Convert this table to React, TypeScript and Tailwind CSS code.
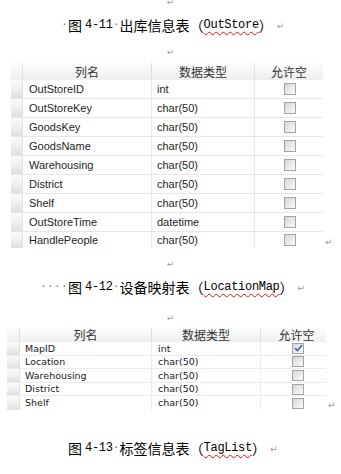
import React from "react";

const CJK = '"Noto Sans CJK SC", "Noto Sans", sans-serif';
const MONO = '"Liberation Mono", "Noto Sans CJK SC", monospace';

function Ret({ className = "" }: { className?: string }) {
  return (
    <span
      className={`text-[9px] leading-none text-[#9a9a9a] ${className}`}
      style={{ fontFamily: '"DejaVu Sans", sans-serif' }}
    >
      ↵
    </span>
  );
}

function Dot() {
  return (
    <span
      className="inline-flex w-[7px] justify-center text-[12px] leading-none text-[#6a6a6a]"
      style={{ fontFamily: '"DejaVu Sans", sans-serif' }}
    >
      ·
    </span>
  );
}

function Mono({ children, wavy = false }: { children: React.ReactNode; wavy?: boolean }) {
  return (
    <span
      className={`text-[12px] tracking-[-0.3px] ${wavy ? "underline decoration-wavy decoration-[#e01010] decoration-1 underline-offset-[3px]" : ""}`}
      style={{ fontFamily: MONO }}
    >
      {children}
    </span>
  );
}

function Title({ lead, dots, num, name, en }: { lead: string; dots: number; num: string; name: string; en: string }) {
  return (
    <div
      className={`flex h-[20px] items-center whitespace-nowrap text-[14px] leading-[20px] text-black ${lead}`}
      style={{ fontFamily: CJK }}
    >
      {Array.from({ length: dots }).map((_, i) => (
        <Dot key={i} />
      ))}
      <span>图</span>
      <span className="inline-block w-[3px]" />
      <Mono>{num}</Mono>
      <Dot />
      <span>{name}</span>
      <span>（</span>
      <Mono wavy>{en}</Mono>
      <span>）</span>
      <Ret className="ml-[4px] mt-[3px]" />
    </div>
  );
}

function Box({ checked = false, small = false }: { checked?: boolean; small?: boolean }) {
  return (
    <span
      className={`inline-flex items-center justify-center border border-[#a4a4a4] bg-gradient-to-br from-[#d6d6d6] to-[#fbfbfb] ${
        small ? "h-[11px] w-[12px]" : "h-[12px] w-[12px]"
      }`}
    >
      {checked && (
        <svg width="9" height="8" viewBox="0 0 9 8">
          <path d="M1 4.2 L3.4 6.5 L8 1.2" fill="none" stroke="#3f64b4" strokeWidth="1.6" />
        </svg>
      )}
    </span>
  );
}

const rows1: [string, string][] = [
  ["OutStoreID", "int"],
  ["OutStoreKey", "char(50)"],
  ["GoodsKey", "char(50)"],
  ["GoodsName", "char(50)"],
  ["Warehousing", "char(50)"],
  ["District", "char(50)"],
  ["Shelf", "char(50)"],
  ["OutStoreTime", "datetime"],
  ["HandlePeople", "char(50)"],
];

const rows2: [string, string, boolean][] = [
  ["MapID", "int", true],
  ["Location", "char(50)", false],
  ["Warehousing", "char(50)", false],
  ["District", "char(50)", false],
  ["Shelf", "char(50)", false],
];

function Table1() {
  return (
    <div className="flex items-end">
      <div className="ml-[11px] w-[312px]">
        <div
          className="grid h-[17px] grid-cols-[12px_129px_103px_68px] bg-gradient-to-b from-[#fdfdfd] to-[#eeeeee] text-[12px] leading-none text-[#333]"
          style={{ fontFamily: CJK }}
        >
          <div className="border-r border-[#dedede]" />
          <div className="flex items-center justify-center border-r border-[#dedede]">列名</div>
          <div className="flex items-center justify-center border-r border-[#dedede]">数据类型</div>
          <div className="flex items-center justify-center">允许空</div>
        </div>
        {rows1.map(([n, t], i) => (
          <div
            key={n}
            className={`grid grid-cols-[12px_129px_103px_68px] text-[11px] leading-none text-[#1e1e1e] ${
              i === rows1.length - 1 ? "h-[16px]" : "h-[19px] border-b border-[#e6e6e6]"
            }`}
            style={{ fontFamily: '"Liberation Sans", Arial, sans-serif' }}
          >
            <div className="border-r border-[#e2e2e2] bg-gradient-to-b from-[#fafafa] via-[#f0f0f0] to-[#dedede]" />
            <div className="flex items-center border-r border-[#e8e8e8] bg-white pl-[6px]">{n}</div>
            <div className="flex items-center border-r border-[#e8e8e8] bg-white pl-[5px]">{t}</div>
            <div className="flex items-center justify-center bg-white pl-[1px]">
              <Box />
            </div>
          </div>
        ))}
      </div>
      <Ret className="mb-[1px] ml-[2px]" />
    </div>
  );
}

function Table2() {
  return (
    <div className="flex items-end">
      <div className="ml-[7px] w-[319px]">
        <div
          className="grid h-[14px] grid-cols-[13px_132px_109px_65px] bg-gradient-to-b from-[#fdfdfd] to-[#efefef] text-[12px] leading-none text-[#333]"
          style={{ fontFamily: CJK }}
        >
          <div className="border-r border-[#dedede]" />
          <div className="flex items-center justify-center border-r border-[#dedede]">列名</div>
          <div className="flex items-center justify-center border-r border-[#dedede]">数据类型</div>
          <div className="flex items-center justify-center pl-[6px]">允许空</div>
        </div>
        {rows2.map(([n, t, c], i) => (
          <div
            key={n}
            className={`grid h-[13.6px] grid-cols-[13px_132px_109px_65px] text-[9.5px] leading-none text-[#1a1a1a] ${
              i === rows2.length - 1 ? "" : "border-b border-[#ececec]"
            }`}
            style={{ fontFamily: '"DejaVu Sans", Verdana, sans-serif' }}
          >
            <div className="border-r border-[#e2e2e2] bg-gradient-to-b from-[#fafafa] via-[#f0f0f0] to-[#e0e0e0]" />
            <div className="flex items-center border-r border-[#ececec] bg-white pl-[5px]">{n}</div>
            <div className="flex items-center border-r border-[#ececec] bg-white pl-[6px]">{t}</div>
            <div className="flex items-center justify-center bg-white pl-[9px]">
              <Box checked={c} small />
            </div>
          </div>
        ))}
      </div>
      <Ret className="mb-[0px] ml-[2px]" />
    </div>
  );
}

function RetRow({ className = "" }: { className?: string }) {
  return (
    <div className={`flex h-[12px] items-center justify-center ${className}`}>
      <Ret />
    </div>
  );
}

export default function App() {
  return (
    <div className="h-[474px] w-[341px] overflow-hidden bg-white">
      <div className="flex h-[6px] items-end justify-center overflow-hidden">
        <Ret className="mb-[-1px]" />
      </div>
      <div className="mt-[9px]">
        <Title lead="pl-[61px]" dots={1} num="4-11" name="出库信息表" en="OutStore" />
      </div>
      <RetRow className="mt-[11px]" />
      <div className="mt-[5px]">
        <Table1 />
      </div>
      <RetRow className="mt-[10px]" />
      <div className="mt-[7px]">
        <Title lead="pl-[40px]" dots={4} num="4-12" name="设备映射表" en="LocationMap" />
      </div>
      <RetRow className="mt-[15px]" />
      <div className="mt-[4px]">
        <Table2 />
      </div>
      <div className="mt-[28px]">
        <Title lead="pl-[68px]" dots={0} num="4-13" name="标签信息表" en="TagList" />
      </div>
    </div>
  );
}
